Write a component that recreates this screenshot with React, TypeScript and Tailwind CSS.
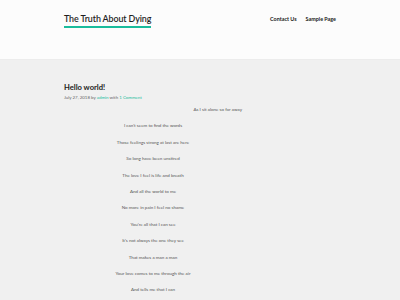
import React from 'react';

const lines = [
  "I can't seem to find the words",
  'Those feelings strong at last are here',
  'So long have been unstired',
  'The love I feel is life and breath',
  'And all the world to me',
  'No more in pain I feel no shame',
  "You're all that I can see",
  "It's not always the one they see",
  'That makes a man a man',
  'Your love comes to me through the air',
  'And tells me that I can',
];

export default function App() {
  return (
    <div className="w-[400px] h-[300px] overflow-hidden bg-[#f0f0f0]" style={{ fontFamily: 'Lato, "Open Sans", sans-serif' }}>
      {/* header */}
      <header className="h-[60px] bg-[#fcfcfc] border-b border-[#ececec]">
        <div className="mx-[64px] flex items-start justify-between pt-[13px]">
          <div className="flex flex-col">
            <span className="text-[8.9px] font-semibold text-[#1f1f1f] leading-[11px] tracking-[-0.1px]">The Truth About Dying</span>
            <span className="mt-[2px] h-[1.5px] w-full bg-[#1abc9c]" />
          </div>
          <nav className="flex gap-[9px] pt-[2px] text-[5.4px] font-bold text-[#222] leading-[8px]">
            <span>Contact Us</span>
            <span>Sample Page</span>
          </nav>
        </div>
      </header>

      {/* post */}
      <main className="ml-[64px] w-[178px] pt-[22px]">
        <h1 className="text-[7.6px] font-bold text-[#222] leading-[10px]">Hello world!</h1>
        <div className="mt-[2px] text-[4.4px] text-[#666] leading-[7px]">
          July 27, 2018 by <span className="text-[#1abc9c]">admin</span> with{' '}
          <span className="text-[#1abc9c]">1 Comment</span>
        </div>
        <p className="mt-[5px] text-right text-[4.5px] text-[#555] leading-[7px]">As I sit alone so far away</p>
        <div className="flex flex-col items-center gap-[9.4px] mt-[9.4px] text-[4.5px] text-[#555] leading-[7px]">
          {lines.map((l) => (
            <p key={l}>{l}</p>
          ))}
        </div>
      </main>
    </div>
  );
}
